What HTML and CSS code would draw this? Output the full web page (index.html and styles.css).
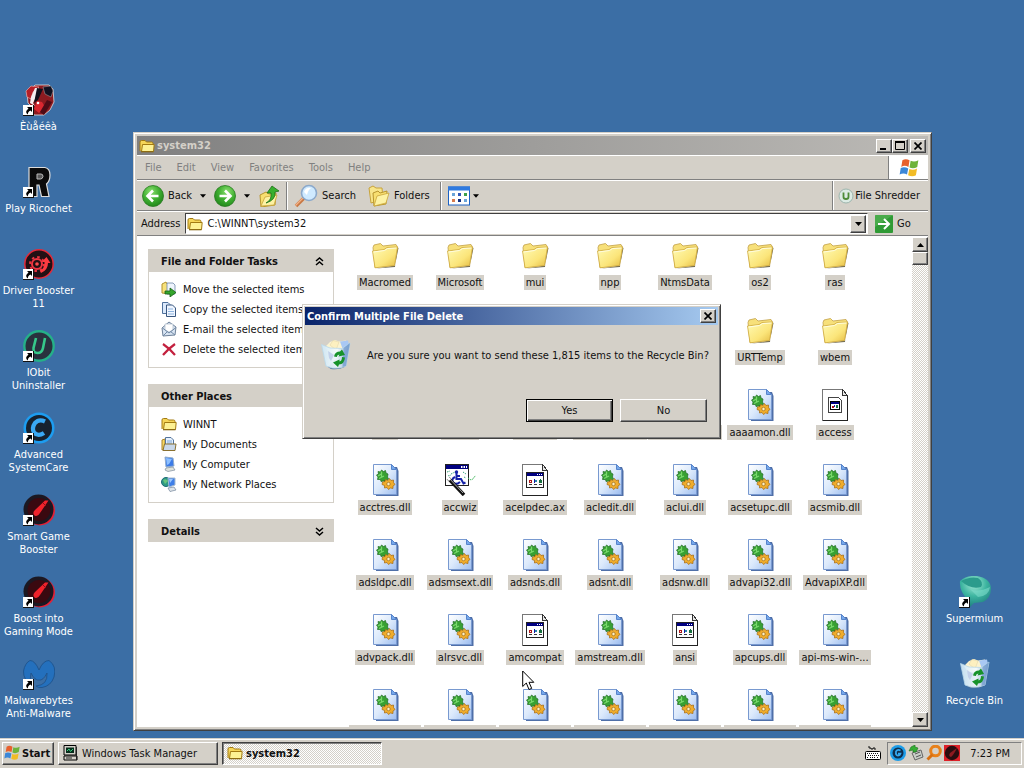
FILE: index.html
```html
<!DOCTYPE html>
<html lang="en">
<head>
<meta charset="utf-8">
<title>system32</title>
<link rel="stylesheet" href="styles.css">
</head>
<body>
<svg class="sprite" aria-hidden="true">
  <defs>
    <linearGradient id="gFolder" x1="0" y1="0" x2="1" y2="1"><stop offset="0" stop-color="#fffbb5"/><stop offset=".6" stop-color="#fbe57a"/><stop offset="1" stop-color="#e3b93f"/></linearGradient>
    <linearGradient id="gPage" x1="0" y1="0" x2="1" y2="1"><stop offset="0" stop-color="#fff"/><stop offset=".5" stop-color="#dbe9fb"/><stop offset="1" stop-color="#9dbdf0"/></linearGradient>
    <radialGradient id="gGreen" cx=".4" cy=".3" r=".8"><stop offset="0" stop-color="#8be070"/><stop offset=".5" stop-color="#3fae31"/><stop offset="1" stop-color="#1c7f16"/></radialGradient>
    <linearGradient id="gBin" x1="0" y1="0" x2="1" y2="0"><stop offset="0" stop-color="#cfe8f6"/><stop offset=".55" stop-color="#f4fbfd"/><stop offset="1" stop-color="#7fa9d6"/></linearGradient>
    <radialGradient id="gTeal" cx=".45" cy=".25" r=".8"><stop offset="0" stop-color="#a6ead8"/><stop offset=".5" stop-color="#3db5a0"/><stop offset="1" stop-color="#1b7a7c"/></radialGradient>

    <symbol id="folder" viewBox="0 0 32 32">
      <path d="M7 29.500L26 26.500L29.500 9L28 8L26 28z" fill="#6f6a55"/>
      <path d="M4 8.500L5 6L11.500 4.500L14 7L27 5.500L28.500 8L25.500 26L6 28.500z" fill="#f7e07a" stroke="#c2a046" stroke-width=".8"/>
      <path d="M3.500 12L15 10.500L18 8.500L28.500 8L25.500 26.500L6 28.800z" fill="url(#gFolder)" stroke="#cfa93f" stroke-width=".8"/>
      <path d="M4.500 13L15.500 11.500L18.500 9.500L27.500 9" fill="none" stroke="#fffde0"/>
    </symbol>
    <symbol id="folder16" viewBox="0 0 16 16">
      <path d="M1 13V4Q1 2.500 2.500 2.500H6L7.500 4H12.500Q14 4 14 5.500V7" fill="#f5d558" stroke="#a27a12"/>
      <path d="M2.500 13.500L3.500 6.500H15.200L14.500 13.500z" fill="#fdf193" stroke="#a27a12"/>
      <path d="M2 13.700H14.500" stroke="#8b6a14" stroke-width="1.200"/>
    </symbol>
    <symbol id="dll" viewBox="0 0 32 32">
      <path d="M7 3H28L29.500 7V32H7z" fill="#4f6fa8"/>
      <path d="M4.500 .5H22.500L27.500 5.500V30.500H4.500z" fill="url(#gPage)" stroke="#7899d0"/>
      <path d="M22.500 .5V5.500H27.500z" fill="#77a9ea" stroke="#5684cc"/>
      <path d="M7.500 11L9.500 10L9 7.500L11.500 8L12.500 6L14.500 7.500L16.500 6.500L17 9L19 10L18.500 13L19.500 15L17.500 16.500L17 18.500L14.500 17L12 17.500L11.500 15.500L8.500 15.500L9 13z" fill="#37a032" stroke="#1f6a22" stroke-width=".7"/>
      <path d="M9 12L13 9.500M12.500 7.500V13M10 14.500L15 12" stroke="#79d86c" stroke-width="1.300"/>
      <path d="M15 16L19 18L17 20z" fill="#25471c"/>
      <path d="M13.500 18L16 17.500L16.500 15.500L19 16.500L20.500 14.500L22 16.500L24.500 16L24.500 18.500L26 20.500L24 22L24 24.500L21.500 24L19.500 25.500L18 23.500L15.500 24L15.500 21.500L13 20.500z" fill="#efac2c" stroke="#a5690f" stroke-width=".7"/>
      <circle cx="19.500" cy="20" r="1.700" fill="#fff0c0" stroke="#8a5a10" stroke-width=".6"/>
    </symbol>
    <symbol id="ax" viewBox="0 0 32 32" shape-rendering="crispEdges">
      <path d="M3.500 .5H23.500L28.500 6.500V31.500H3.500z" fill="#fff" stroke="#777"/>
      <path d="M28.500 6.500V31.500H3.500" fill="none" stroke="#222"/><path d="M23.500 .5V6.500H28.500z" fill="#e8e8e8" stroke="#333"/>
      <rect x="7.500" y="8.500" width="17" height="15" fill="#fff" stroke="#222"/>
      <rect x="8" y="9" width="16" height="3" fill="#000080"/><path d="M18 10.500h1m1 0h1m1 0h1" stroke="#fff"/>
      <rect x="10" y="16" width="3" height="3" fill="#b01818"/><rect x="11" y="17" width="1" height="1" fill="#fff"/><rect x="15" y="15" width="1" height="4" fill="#1818a8"/><rect x="16" y="16" width="2" height="2" fill="#2a8aaa"/><rect x="20" y="16" width="3" height="3" fill="#187040"/><rect x="21" y="15" width="1" height="1" fill="#187040"/>
      <path d="M10 20.500h3m2 0h3m2 0h3" stroke="#333" stroke-width="1"/>
    </symbol>
    <symbol id="accessfile" viewBox="0 0 32 32" shape-rendering="crispEdges">
      <path d="M3.500 .5H23.500L28.500 6.500V31.500H3.500z" fill="#fff" stroke="#777"/>
      <path d="M28.500 6.500V31.500H3.500" fill="none" stroke="#222"/><path d="M23.500 .5V6.500H28.500z" fill="#e8e8e8" stroke="#333"/>
      <path d="M9.500 8.500H19.500L22.500 11.500V23.500H9.500z" fill="#fff" stroke="#444"/>
      <rect x="11.500" y="12.500" width="9" height="8" fill="#fff" stroke="#000"/><rect x="12" y="13" width="8" height="2" fill="#000080"/>
      <rect x="13" y="17" width="2" height="2" fill="#b01818"/><rect x="15" y="16" width="1" height="2" fill="#1818a8"/><rect x="17" y="16" width="2" height="3" fill="#187040"/>
    </symbol>
    <symbol id="accwiz" viewBox="0 0 32 32">
      <rect x="1.500" y=".5" width="23" height="21" fill="#fff" stroke="#222"/><rect x="2" y="1" width="22" height="4" fill="#000080"/><path d="M17 3h1.500m1 0h1.500m1 0h1" stroke="#fff" stroke-width="2"/>
      <path d="M3 8l3-1m1 3l4-2m-7 4l3-1m12-3l3 2m-2 3l2 1" stroke="#35a57a" stroke-dasharray="1.500 1"/>
      <circle cx="12.500" cy="8" r="1.700" fill="#1522a8"/><path d="M12.500 9V15H17L19.500 19.500L21.500 18.500M12.500 12H16M11 13Q7 15 9 18.500Q12 21.500 16 18" stroke="#1522a8" stroke-width="2" fill="none"/>
      <path d="M24 14l3 2l2-1l1-2l2-1" stroke="#3bb558" fill="none" stroke-dasharray="1.500 1"/>
      <path d="M4 14L20 31" stroke="#111" stroke-width="3.500"/><path d="M4.500 13.500L19 29" stroke="#a8a8a8" stroke-width="1"/><path d="M3 13L6 16" stroke="#fff" stroke-width="3"/>
    </symbol>
    <symbol id="bin" viewBox="0 0 32 32">
      <path d="M28 7L24.500 28Q19 31 11 30L8 28z" fill="#54749d"/>
      <path d="M5 8L10 3L15 1L19 2.500L26 1.500L28 9L24 14H9z" fill="#fbf3d0"/><path d="M20 2.500L28 1.500L29 6L23 11z" fill="#a9c8f4"/><path d="M10 6L13 1.500L19 3L16 11z" fill="#fdf0c0" stroke="#e0d2a4" stroke-width=".5"/>
      <path d="M1.500 5.500L10 9L22 9.500L30 4L26 27Q20 30 12 29L6 27z" fill="url(#gBin)" fill-opacity=".93" stroke="#b9d8ea" stroke-width=".8"/>
      <path d="M23.500 9L30 4L26 27L22.500 28z" fill="#6d97cd" opacity=".65"/>
      <path d="M8 12l6 4-3 6-2-3z" fill="#b7c5e6" opacity=".7"/>
      <path d="M14 17.500Q15 12.500 20 12.500L22 10.500L25 16L18.500 17.500L19.500 15.500Q17 15.500 16.800 18z" fill="#17922a"/>
      <path d="M25 18.500Q24.500 25 19 25.500L18 28L13 23.500L19.500 20.500L19.500 22.500Q22 22 22 18z" fill="#17922a"/>
    </symbol>
    <symbol id="shortcut" viewBox="0 0 11 11"><rect width="11" height="11" fill="#111"/><rect width="10" height="10" fill="#fff"/><path d="M4 2H9V7L7.500 5.500Q4.500 7 5 9.500Q1 7 5.500 3.500z" fill="#000"/></symbol>
    <symbol id="flag" viewBox="0 0 20 20">
      <path d="M4 3Q7 1 10.500 3L9.500 9Q6 7 3 9z" fill="#e8602c"/><path d="M11.500 3.500Q15 5 18.500 3L17.500 9Q14 11 10.500 9.500z" fill="#6db33a"/><path d="M2.500 10Q6 8.500 9.300 10.500L8.200 16Q5 14 1.500 16z" fill="#3b87d8"/><path d="M10.300 11Q14 12.500 17.300 10.500L16.300 16.500Q13 18.500 9.200 16.500z" fill="#f2bc26"/>
    </symbol>
    <symbol id="gauge" viewBox="0 0 32 32">
      <circle cx="17" cy="16.500" r="15" fill="#e61f35"/><circle cx="15.500" cy="15.500" r="15" fill="#1b1822"/><circle cx="16" cy="15.500" r="11.500" fill="#3a0910"/><path d="M25.500 6.500L22 6.500L12 16Q9 19 11.500 21.500Q14.500 23.500 17 19z" fill="#f0222b"/><path d="M20 9L23 12" stroke="#8e101a" stroke-width="1"/>
    </symbol>
    <symbol id="care" viewBox="0 0 32 32"><circle cx="16" cy="16" r="15.500" fill="#1d9df0"/><circle cx="16" cy="16" r="13" fill="#17222f"/><path d="M22 9.500Q16 6.500 12 11Q8.500 16 11 20.500Q15 25 21 21" fill="none" stroke="#3aa8f3" stroke-width="4.200"/></symbol>
    <symbol id="back" viewBox="0 0 22 22"><circle cx="11" cy="11" r="10.500" fill="url(#gGreen)" stroke="#2a7a22" stroke-width=".8"/><path d="M16.500 11H6M11 5.500L5.500 11L11 16.500" fill="none" stroke="#fff" stroke-width="2.600"/></symbol>
    <symbol id="pc" viewBox="0 0 16 16"><path d="M4 1L12 2L13 10L5 11z" fill="#3c7be8" stroke="#8faccd"/><path d="M5 2L11 3L8 8L6 9z" fill="#8dc0ff"/><path d="M5 12L12 11L14 14L7 15.500L4 14z" fill="#e0e3dc" stroke="#7d8b9b" stroke-width=".7"/></symbol>
    <symbol id="drop" viewBox="0 0 7 4"><path d="M0 0H7L3.500 4z"/></symbol>
    <symbol id="x" viewBox="0 0 8 8"><path d="M.5 .5L7.500 7.500M7.500 .5L.5 7.500" stroke="#000" stroke-width="1.700"/></symbol>
    <symbol id="up2" viewBox="0 0 9 9"><path d="M1 4L4.500 1L8 4M1 8L4.500 5L8 8" fill="none" stroke="#000" stroke-width="1.500"/></symbol>
  </defs>
</svg>

<main class="desktop">
  <ul class="shortcuts">
    <li><span class="pic"><svg viewBox="0 0 32 32"><path d="M4 8L9 4L12 1H26L30 5L31 18L27 26L21 31H11L8 22L5 19z" fill="#8c1a20" stroke="#ddd" stroke-width=".8"/><path d="M3 7L8 2L16 3L10 8L8 15L4 13z" fill="#b51f28" stroke="#f3b5b0" stroke-width=".6"/><path d="M12 4L16 4L13 13L10 19L12 22L7 19L8 13z" fill="#f5eef0"/><path d="M14 4L20 5L15 16L11 19z" fill="#12101c"/><path d="M20 3L28 2L30 7L28 13L22 10z" fill="#101020" stroke="#aaa" stroke-width=".5"/><path d="M14 17L19 18L22 23L16 29L11 25z" fill="#d92730"/><path d="M24 16L29 18L21 31L17 28z" fill="#4e0b16"/><circle cx="15" cy="19" r="1.300" fill="#fff"/></svg><svg class="arrow"><use href="#shortcut"/></svg></span><span>Èùåéêà</span></li>
    <li><span class="pic"><svg viewBox="0 0 32 32"><path d="M6 1.500H22Q27 2.500 27 9Q27 15 23.500 18L26 30.500H18.500L16 19H14V30.500H6z" fill="#0b0b0b" stroke="#dcdcdc" stroke-width="1.200"/><path d="M14 8H18Q20 8 20 10.500Q19.500 13 17.500 13H14z" fill="#5b5b5b" stroke="#bbb" stroke-width="1"/></svg><svg class="arrow"><use href="#shortcut"/></svg></span><span>Play Ricochet</span></li>
    <li><span class="pic"><svg viewBox="0 0 32 32"><circle cx="16" cy="16" r="14.200" fill="#231014" stroke="#e42a3a" stroke-width="1.500"/><circle cx="14" cy="16" r="5" fill="none" stroke="#ee3440" stroke-width="2"/><circle cx="14" cy="16" r="7" fill="none" stroke="#ee3440" stroke-width="2" stroke-dasharray="2.500 3"/><path d="M17 23Q22 20 21.500 14H18.500L23.500 9L27.500 15H25Q25 22 18 25z" fill="#ff3b40"/><circle cx="14" cy="16" r="1.800" fill="#ff4b4b"/></svg><svg class="arrow"><use href="#shortcut"/></svg></span><span>Driver Booster 11</span></li>
    <li><span class="pic"><svg viewBox="0 0 32 32"><circle cx="16" cy="16" r="14.700" fill="#29323e" stroke="#25b088" stroke-width="2.400"/><path d="M13 8L10.500 18Q10 23 14.500 23Q19 23 20 18L22 8" fill="none" stroke="#36c98a" stroke-width="2.600"/></svg><svg class="arrow"><use href="#shortcut"/></svg></span><span>IObit Uninstaller</span></li>
    <li><span class="pic"><svg><use href="#care"/></svg><svg class="arrow"><use href="#shortcut"/></svg></span><span>Advanced SystemCare</span></li>
    <li><span class="pic"><svg><use href="#gauge"/></svg><svg class="arrow"><use href="#shortcut"/></svg></span><span>Smart Game Booster</span></li>
    <li><span class="pic"><svg><use href="#gauge"/></svg><svg class="arrow"><use href="#shortcut"/></svg></span><span>Boost into Gaming Mode</span></li>
    <li><span class="pic"><svg viewBox="0 0 32 32"><path d="M7 2.500Q12 2.500 16 12Q20 2.500 26 2.500Q34 8 31 19Q28 28 19 29.500Q15 30 13 28Q25 27 24 15Q20 23 16 22Q12 23 8 15Q6 22 9 27Q0 22 .5 13Q2 5 7 2.500z" fill="#2470bd" stroke="#1f548c" stroke-width=".9"/></svg><svg class="arrow"><use href="#shortcut"/></svg></span><span>Malwarebytes Anti-Malware</span></li>
  </ul>
  <ul class="shortcuts shortcuts-right">
    <li><span class="pic"><svg viewBox="0 0 32 32"><path d="M1 5Q8 -1 18 0Q31 2 32 12Q32 22 24 26L15 27L11 31L10 25Q0 16 1 5z" fill="url(#gTeal)"/><path d="M2 5Q11 0 19 2Q25 6 22 11Q12 14 2 5z" fill="#2b9b8c"/><path d="M11 13Q19 17 31 11Q30 20 19 21z" fill="#7fdccb" opacity=".6"/></svg><svg class="arrow"><use href="#shortcut"/></svg></span><span>Supermium</span></li>
    <li><span class="pic"><svg><use href="#bin"/></svg></span><span>Recycle Bin</span></li>
  </ul>

  <section class="window explorer" aria-label="system32">
    <header class="titlebar inactive">
      <svg class="i16"><use href="#folder16"/></svg><h1>system32</h1>
      <div class="controls">
        <button class="cap" aria-label="Minimize"><svg viewBox="0 0 10 9"><path d="M1 7H7V9H1z"/></svg></button>
        <button class="cap" aria-label="Maximize"><svg viewBox="0 0 10 9"><path d="M.5 1H9.500V8.500H.5z" fill="none" stroke="#000"/><path d="M0 1H10" stroke="#000" stroke-width="2"/></svg></button>
        <button class="cap cap-close" aria-label="Close"><svg class="i8"><use href="#x"/></svg></button>
      </div>
    </header>
    <div class="bar menubar">
      <nav><button>File</button><button>Edit</button><button>View</button><button>Favorites</button><button>Tools</button><button>Help</button></nav>
      <div class="throbber"><svg class="i22"><use href="#flag"/></svg></div>
    </div>
    <div class="bar toolbar">
      <div class="tools">
        <button class="tool"><svg class="i22"><use href="#back"/></svg>Back</button>
        <button class="more" aria-label="Back history"><svg><use href="#drop"/></svg></button>
        <button class="tool" aria-label="Forward"><svg class="i22 flip"><use href="#back"/></svg></button>
        <button class="more" aria-label="Forward history"><svg><use href="#drop"/></svg></button>
        <button class="tool" aria-label="Up"><svg class="i22" viewBox="0 0 22 22"><path d="M2 10L8 7L11 9L18 8L17 20L3 22z" fill="#f8df70" stroke="#b8952e"/><path d="M3 21L7 12L19 10L16 20z" fill="#fdf2a4" stroke="#c9a43a" stroke-width=".8"/><path d="M8 18Q14 15 13 8H9L14 1L21 6L17 7Q18 15 8 18z" fill="#38b02e" stroke="#1c6f17" stroke-width=".8"/></svg></button>
        <span class="rule"></span>
        <button class="tool"><svg class="i24" viewBox="0 0 24 24"><path d="M10 14L2 22" stroke="#c87844" stroke-width="3.500"/><path d="M9 14L1.500 21.500" stroke="#f3b287" stroke-width="1.200"/><circle cx="15" cy="9" r="7.500" fill="#cfeaff" stroke="#8ba9cb" stroke-width="1.600"/><path d="M10 8Q12 3 17 4Q14 6 13 11z" fill="#fff"/></svg>Search</button>
        <button class="tool folders"><svg class="i22" viewBox="0 0 22 22"><path d="M1 3L5 1L8 3H14L15 14L3 18z" fill="#f8e58a" stroke="#c8a33b"/><path d="M5 8L10 6L12 8L19 6L18 19L6 21z" fill="#f8df70" stroke="#b8952e"/><path d="M6 21L9 11L21 8L18 18z" fill="#fdf2a4" stroke="#c9a43a" stroke-width=".8"/></svg>Folders</button>
        <span class="rule"></span>
        <button class="tool" aria-label="Views"><svg class="i22" viewBox="0 0 22 22"><rect x=".5" y="2" width="21" height="18" fill="#fff" stroke="#1c62c4"/><rect x="0" y="1.500" width="22" height="4" fill="#2f7ae0"/><path d="M4 8h3v3H4zM16 14h3v3h-3z" fill="#6aa4d8"/><path d="M10 8h3v3h-3z" fill="#3158b8"/><path d="M16 8h3v3h-3z" fill="#3da04a"/><path d="M4 14h3v3H4z" fill="#d77a4c"/><path d="M10 14h3v3h-3z" fill="#102d80"/></svg></button>
        <button class="more views" aria-label="View options"><svg><use href="#drop"/></svg></button>
      </div>
      <button class="tool shredder"><svg class="i16" viewBox="0 0 16 16"><circle cx="8" cy="8" r="7" fill="#dcebe4" stroke="#9db5ad"/><path d="M5.500 4.500V9Q5.500 11 8 11Q10.500 11 10.500 9V4.500" fill="none" stroke="#4d8b38" stroke-width="1.800"/></svg>File Shredder</button>
    </div>
    <div class="bar addressbar">
      <label for="address">Address</label>
      <div class="combo">
        <svg class="i16"><use href="#folder16"/></svg>
        <input id="address" type="text" value="C:\WINNT\system32">
        <button class="cap" aria-label="Show addresses"><svg class="tri"><use href="#drop"/></svg></button>
      </div>
      <button class="go"><svg class="i18" viewBox="0 0 18 18"><rect width="18" height="18" rx="1" fill="#2f9a35"/><path d="M0 0H18L0 12z" fill="#5cb85a" opacity=".6"/><path d="M3 9H14M9 4L14 9L9 14" fill="none" stroke="#fff" stroke-width="2"/></svg>Go</button>
    </div>
    <div class="content">
      <aside class="side">
        <section class="panel">
          <h2>File and Folder Tasks<button aria-label="Collapse"><svg><use href="#up2"/></svg></button></h2>
          <ul>
            <li><a href="#"><svg viewBox="0 0 16 16"><path d="M1 12V3L5 1L6 3H10V13z" fill="#f7e17a" stroke="#b0912f"/><path d="M6 2H12L14 4V13H6z" fill="#eef4fc" stroke="#6d86a8" stroke-width=".8"/><path d="M4 10H9V7L15 11.500L9 16V13H4z" fill="#35a52c" stroke="#185f14" stroke-width=".8"/></svg>Move the selected items</a></li>
            <li><a href="#"><svg viewBox="0 0 16 16"><path d="M1.500 1.500H7L9 3.500V12.500H1.500z" fill="#dbe9fb" stroke="#4f719c"/><path d="M5.500 4H11.500L14.500 7V15.500H5.500z" fill="#f0f6ff" stroke="#39567f"/><path d="M7 8H12M7 10.500H13M7 13H13" stroke="#8db3de"/></svg>Copy the selected items</a></li>
            <li><a href="#"><svg viewBox="0 0 16 16"><path d="M1 7L8 1L15 6L14 14L2 15z" fill="#d8e4f2" stroke="#6d8098"/><path d="M4 3H12V9L8 11L4 9z" fill="#fff" stroke="#a9b8c8" stroke-width=".7"/><path d="M1.500 7L8 12L15 6.500M2 15L6.500 10.500M14 14L9.500 10.500" stroke="#7189a5" fill="none"/></svg>E-mail the selected items</a></li>
            <li><a href="#"><svg viewBox="0 0 16 16"><path d="M2 3Q8 7 14 14M14 3Q7 8 2 14" stroke="#c3203e" stroke-width="2.200" fill="none"/></svg>Delete the selected items</a></li>
          </ul>
        </section>
        <section class="panel">
          <h2>Other Places<button aria-label="Collapse"><svg><use href="#up2"/></svg></button></h2>
          <ul>
            <li><a href="#"><svg><use href="#folder16"/></svg>WINNT</a></li>
            <li><a href="#"><svg viewBox="0 0 16 16"><path d="M1 14V4L4 3V13z" fill="#f7d964" stroke="#a9832a"/><path d="M4.500 1.500H10L12.500 4V11H4.500z" fill="#e6f1fd" stroke="#54759d"/><path d="M6 5H11M6 7H11" stroke="#7ca6d8"/><path d="M2 14.500L3.500 8H15L14 14.500z" fill="#c9d8ea" stroke="#8a7130"/></svg>My Documents</a></li>
            <li><a href="#"><svg><use href="#pc"/></svg>My Computer</a></li>
            <li><a href="#"><svg viewBox="0 0 16 16"><circle cx="5" cy="6" r="4.500" fill="#2f9a83" stroke="#1c6a78"/><path d="M2 4Q5 2 7 5L4 8z" fill="#67c57c"/><path d="M7 2L14 2L14 9L8 11z" fill="#3f7fe8" stroke="#a4bad0"/><path d="M8 3L12 3L9 7z" fill="#9cc9ff"/><path d="M7 12L13 11L15 14L9 15.500z" fill="#dfe5ea" stroke="#73859b" stroke-width=".7"/></svg>My Network Places</a></li>
          </ul>
        </section>
        <section class="panel">
          <h2>Details<button aria-label="Expand"><svg class="down"><use href="#up2"/></svg></button></h2>
        </section>
      </aside>
      <ul class="files">
        <li><svg><use href="#folder"/></svg><span>Macromed</span></li>
        <li><svg><use href="#folder"/></svg><span>Microsoft</span></li>
        <li><svg><use href="#folder"/></svg><span>mui</span></li>
        <li><svg><use href="#folder"/></svg><span>npp</span></li>
        <li><svg><use href="#folder"/></svg><span>NtmsData</span></li>
        <li><svg><use href="#folder"/></svg><span>os2</span></li>
        <li><svg><use href="#folder"/></svg><span>ras</span></li>
        <li><svg><use href="#folder"/></svg></li>
        <li><svg><use href="#folder"/></svg></li>
        <li><svg><use href="#folder"/></svg></li>
        <li><svg><use href="#folder"/></svg></li>
        <li><svg><use href="#folder"/></svg></li>
        <li><svg><use href="#folder"/></svg><span>URTTemp</span></li>
        <li><svg><use href="#folder"/></svg><span>wbem</span></li>
        <li><svg><use href="#folder"/></svg><span>wins</span></li>
        <li><svg><use href="#folder"/></svg><span>xircom</span></li>
        <li><svg><use href="#ax"/></svg><span>$winnt$</span></li>
        <li><svg><use href="#ax"/></svg><span>12520437.cpx</span></li>
        <li><svg><use href="#ax"/></svg><span>12520850.cpx</span></li>
        <li><svg><use href="#dll"/></svg><span>aaaamon.dll</span></li>
        <li><svg><use href="#accessfile"/></svg><span>access</span></li>
        <li><svg><use href="#dll"/></svg><span>acctres.dll</span></li>
        <li><svg><use href="#accwiz"/></svg><span>accwiz</span></li>
        <li><svg><use href="#ax"/></svg><span>acelpdec.ax</span></li>
        <li><svg><use href="#dll"/></svg><span>acledit.dll</span></li>
        <li><svg><use href="#dll"/></svg><span>aclui.dll</span></li>
        <li><svg><use href="#dll"/></svg><span>acsetupc.dll</span></li>
        <li><svg><use href="#dll"/></svg><span>acsmib.dll</span></li>
        <li><svg><use href="#dll"/></svg><span>adsldpc.dll</span></li>
        <li><svg><use href="#dll"/></svg><span>adsmsext.dll</span></li>
        <li><svg><use href="#dll"/></svg><span>adsnds.dll</span></li>
        <li><svg><use href="#dll"/></svg><span>adsnt.dll</span></li>
        <li><svg><use href="#dll"/></svg><span>adsnw.dll</span></li>
        <li><svg><use href="#dll"/></svg><span>advapi32.dll</span></li>
        <li><svg><use href="#dll"/></svg><span>AdvapiXP.dll</span></li>
        <li><svg><use href="#dll"/></svg><span>advpack.dll</span></li>
        <li><svg><use href="#dll"/></svg><span>alrsvc.dll</span></li>
        <li><svg><use href="#ax"/></svg><span>amcompat</span></li>
        <li><svg><use href="#dll"/></svg><span>amstream.dll</span></li>
        <li><svg><use href="#ax"/></svg><span>ansi</span></li>
        <li><svg><use href="#dll"/></svg><span>apcups.dll</span></li>
        <li><svg><use href="#dll"/></svg><span>api-ms-win-...</span></li>
        <li><svg><use href="#dll"/></svg><span>api-ms-win-...</span></li>
        <li><svg><use href="#dll"/></svg><span>api-ms-win-...</span></li>
        <li><svg><use href="#dll"/></svg><span>api-ms-win-...</span></li>
        <li><svg><use href="#dll"/></svg><span>api-ms-win-...</span></li>
        <li><svg><use href="#dll"/></svg><span>api-ms-win-...</span></li>
        <li><svg><use href="#dll"/></svg><span>api-ms-win-...</span></li>
        <li><svg><use href="#dll"/></svg><span>api-ms-win-...</span></li>
      </ul>
      <div class="scrollbar">
        <button class="cap" aria-label="Scroll up"><svg class="tri down"><use href="#drop"/></svg></button>
        <div class="thumb"></div>
        <button class="cap last" aria-label="Scroll down"><svg class="tri"><use href="#drop"/></svg></button>
      </div>
    </div>
  </section>

  <section class="window dialog" role="dialog" aria-labelledby="dlg">
    <header class="titlebar active"><h1 id="dlg">Confirm Multiple File Delete</h1><div class="controls"><button class="cap" aria-label="Close dialog"><svg class="i8"><use href="#x"/></svg></button></div></header>
    <div class="question"><svg class="i32"><use href="#bin"/></svg><p>Are you sure you want to send these 1,815 items to the Recycle Bin?</p></div>
    <div class="answers"><button class="push default">Yes</button><button class="push">No</button></div>
  </section>

  <svg class="pointer" viewBox="0 0 13 21"><path d="M.7 1V16.500L4.300 13L7 19.500L9.700 18.400L7 12.300H11.800z" fill="#fff" stroke="#000"/></svg>
</main>

<footer class="taskbar">
  <button class="start"><svg class="i18"><use href="#flag"/></svg>Start</button>
  <button class="task"><svg class="i16" viewBox="0 0 16 16"><path d="M1 .5H13V10H1z" fill="#d4d0c8" stroke="#000"/><rect x="3" y="2.500" width="8" height="5.500" fill="#052c1b"/><path d="M4 6L6 4L7.500 6.500L10 4" stroke="#3bd080" fill="none"/><path d="M1 11H14V15H1z" fill="#d4d0c8" stroke="#000"/><path d="M3 13H9M13.500 2V15" stroke="#222"/></svg>Windows Task Manager</button>
  <button class="task pressed"><svg class="i16"><use href="#folder16"/></svg>system32</button>
  <svg class="i16 keyboard" viewBox="0 0 16 16"><path d="M4 1V3H6V4H8V3H10V5" fill="none" stroke="#111"/><rect x=".5" y="6.500" width="15" height="8" rx="1" fill="#fff" stroke="#000"/><path d="M2 8.500H14M3 10.500H14M2 12.500H4M5 12.500H11M12 12.500H14" stroke="#111" stroke-dasharray="1 1"/></svg>
  <div class="tray">
    <svg class="i16" viewBox="0 0 32 32"><circle cx="16" cy="16" r="16" fill="#1c9ce8"/><circle cx="16" cy="16" r="11" fill="#0f2e4c"/><path d="M21 11Q15 8 12 13Q11 21 16 21Q20 21 21 17H16" fill="none" stroke="#33a9f2" stroke-width="3.500"/></svg>
    <svg class="i16" viewBox="0 0 16 16"><path d="M4 8L13 5L15 12L7 15z" fill="#c9cdc8" stroke="#666"/><path d="M7 9L12 7M8 12L13 10" stroke="#555"/><path d="M3 2L7 0L7 2L10 3L8 7L5 7L5 5L1 6z" fill="#35ae35" stroke="#1c701c" stroke-width=".6"/></svg>
    <svg class="i16" viewBox="0 0 16 16"><circle cx="9.500" cy="6" r="4.800" fill="none" stroke="#e8811a" stroke-width="3"/><path d="M6.500 9.500L1.500 14.500" stroke="#d86f10" stroke-width="3"/></svg>
    <svg class="i16" viewBox="0 0 16 16"><rect width="16" height="16" fill="#dd2028"/><circle cx="8" cy="8" r="7.200" fill="#2a0d10"/><path d="M13 3L6 8Q4 11 7 12Q9 11 13 3z" fill="#8e1a20"/></svg>
    <time>7:23 PM</time>
  </div>
</footer>
</body>
</html>
```

FILE: styles.css
```css
* { box-sizing: border-box; }

:root {
  --face: #d4d0c8;
  --shade: #808080;
  --dark: #404040;
}

body {
  margin: 0;
  height: 100vh;
  display: flex;
  flex-direction: column;
  overflow: hidden;
  font: 11px/13px "DejaVu Sans Condensed", "Noto Sans", sans-serif;
  color: #111;
  background: #3b6ea5;
  cursor: default;
}

ul, h1, h2, p { margin: 0; padding: 0; list-style: none; font-size: 11px; }
a { color: inherit; text-decoration: none; }
svg { display: block; flex: none; }
button {
  font: inherit;
  color: inherit;
  padding: 0;
  margin: 0;
  border: 0;
  background: none;
  white-space: nowrap;
}

.sprite { position: absolute; width: 0; height: 0; }
.i8 { width: 8px; height: 8px; }
.i16 { width: 16px; height: 16px; }
.i18 { width: 18px; height: 18px; }
.i22 { width: 22px; height: 22px; }
.i24 { width: 24px; height: 24px; }
.i32 { width: 32px; height: 32px; }
.flip { transform: scaleX(-1); }
.down { transform: scaleY(-1); }

/* Desktop */
.desktop { position: relative; flex: 1; min-height: 0; }

.shortcuts {
  position: absolute;
  left: 0;
  top: 84px;
  width: 77px;
  display: grid;
  grid-auto-rows: 82px;
  color: #fff;
  text-align: center;
}
.shortcuts-right { left: auto; right: 11px; top: 576px; }
.shortcuts li { display: flex; flex-direction: column; align-items: center; gap: 4px; }
.pic { position: relative; }
.pic svg { width: 32px; height: 32px; }
.pic .arrow { position: absolute; left: 0; bottom: 0; width: 11px; height: 11px; }

/* Windows */
.window {
  position: absolute;
  display: flex;
  flex-direction: column;
  background: var(--face);
  border: 1px solid;
  border-color: var(--face) var(--dark) var(--dark) var(--face);
  box-shadow: inset 1px 1px #fff, inset -1px -1px var(--shade);
}
.explorer { left: 133px; right: 92px; top: 132px; bottom: 7px; padding: 3px; }
.dialog { left: 302px; top: 304px; width: 419px; padding: 2px; }

.titlebar { display: flex; align-items: center; height: 18px; padding: 0 2px; gap: 2px; }
.titlebar h1 { flex: 1; font-weight: bold; }
.inactive { height: 19px; color: #d4d0c8; background: linear-gradient(90deg, #808080, #bcbab6); }
.active { color: #fff; background: linear-gradient(90deg, #0a246a, #a6caf0); }

.controls { display: flex; }
.cap {
  display: flex;
  align-items: center;
  justify-content: center;
  width: 16px;
  height: 14px;
  background: var(--face);
  border: 1px solid;
  border-color: #fff var(--dark) var(--dark) #fff;
  box-shadow: inset -1px -1px var(--shade);
}
.cap svg { width: 10px; height: 9px; }
.cap .i8 { width: 8px; height: 8px; }
.cap .tri { width: 7px; height: 4px; }
.cap-close { margin-left: 2px; }

.bar {
  display: flex;
  border-top: 1px solid #fff;
  border-bottom: 1px solid var(--shade);
}
.menubar { height: 25px; color: #808080; }
.menubar nav { flex: 1; display: flex; align-items: center; gap: 15px; padding-left: 8px; }
.throbber {
  width: 40px;
  display: flex;
  align-items: center;
  justify-content: center;
  background: #fff;
  border-left: 1px solid var(--shade);
}

.toolbar { height: 31px; }
.tools { flex: 1; display: flex; align-items: center; padding-left: 5px; }
.tool { display: flex; align-items: center; gap: 4px; }
.more { width: 22px; display: flex; justify-content: center; }
.more svg { width: 6px; height: 4px; }
.views { width: 12px; }
.rule { width: 2px; height: 28px; margin: 0 6px; background: linear-gradient(90deg, #808080 50%, #fff 50%); }
.folders { margin-left: 12px; margin-right: 4px; }
.shredder { padding: 0 8px 0 5px; gap: 1px; border-left: 1px solid var(--shade); box-shadow: inset 1px 0 #fff; }

.addressbar { height: 25px; align-items: center; padding-left: 4px; }
.combo {
  flex: 1;
  display: flex;
  align-items: center;
  gap: 4px;
  height: 21px;
  margin-left: 5px;
  padding: 0 1px 0 1px;
  background: #fff;
  border: 1px solid;
  border-color: var(--dark) #fff #fff var(--dark);
}
.combo input { flex: 1; min-width: 0; border: 0; padding: 0; font: inherit; color: inherit; background: none; outline: 0; }
.combo .cap { height: 18px; }
.go { display: flex; align-items: center; gap: 4px; width: 60px; padding-left: 7px; }

.content { flex: 1; display: flex; min-height: 0; padding-top: 1px; background: #fff; overflow: hidden; }

/* Task pane */
.side { width: 211px; padding: 12px 14px 0 11px; display: flex; flex-direction: column; gap: 16px; overflow: hidden; flex: none; }
.panel h2 {
  display: flex;
  align-items: center;
  justify-content: space-between;
  height: 23px;
  padding: 2px 10px 0 13px;
  background: var(--face);
}
.panel h2 svg { width: 9px; height: 9px; }
.panel ul { border: 1px solid var(--face); border-top: 0; padding: 7px 0 8px 12px; }
.panel a { display: flex; align-items: center; gap: 6px; height: 20px; white-space: nowrap; }
.panel a svg { width: 16px; height: 16px; }

/* Icon view */
.files {
  flex: 1;
  display: grid;
  grid-template-columns: repeat(auto-fill, 75px);
  grid-auto-rows: 75px;
  padding-top: 2px;
  text-align: center;
  overflow: hidden;
}
.files li { display: flex; flex-direction: column; align-items: center; gap: 4px; padding-right: 1px; }
.files svg { width: 32px; height: 32px; }
.files span { max-width: 74px; padding: 1px 2px; background: var(--face); white-space: nowrap; overflow: hidden; text-overflow: ellipsis; }

.scrollbar {
  width: 16px;
  display: flex;
  flex-direction: column;
  background: repeating-conic-gradient(#fff 0 25%, var(--face) 0 50%) 0 0 / 2px 2px;
}
.scrollbar .cap { height: 15px; flex: none; }
.thumb { height: 13px; background: var(--face); border: 1px solid; border-color: #fff var(--dark) var(--dark) #fff; box-shadow: inset -1px -1px var(--shade); }
.last { margin-top: auto; }

/* Confirmation */
.question { display: flex; align-items: center; gap: 15px; padding: 14px 15px 0; white-space: nowrap; }
.answers { display: flex; justify-content: flex-end; gap: 7px; padding: 28px 11px 14px; }
.push {
  width: 87px;
  height: 23px;
  border: 1px solid;
  border-color: #fff var(--dark) var(--dark) #fff;
  box-shadow: inset -1px -1px var(--shade);
}
.default { border-color: #000; box-shadow: inset 1px 1px #fff, inset -1px -1px var(--dark), inset -2px -2px var(--shade); }

.pointer { position: absolute; left: 522px; top: 670px; width: 13px; height: 21px; }

/* Taskbar */
.taskbar {
  display: flex;
  align-items: center;
  height: 30px;
  padding: 0 2px;
  background: var(--face);
  box-shadow: inset 0 1px var(--face), inset 0 2px #fff;
}
.start, .task {
  display: flex;
  align-items: center;
  height: 23px;
  border: 1px solid;
  border-color: #fff var(--dark) var(--dark) #fff;
  box-shadow: inset -1px -1px var(--shade);
}
.start { width: 52px; gap: 1px; font-weight: bold; }
.task { width: 160px; margin-left: 4px; padding-left: 4px; gap: 3px; }
.start + .task { margin-left: 4px; }
.pressed {
  font-weight: bold;
  border-color: var(--dark) #fff #fff var(--dark);
  box-shadow: inset 1px 1px var(--shade);
  background: repeating-conic-gradient(#fff 0 25%, var(--face) 0 50%) 0 0 / 2px 2px;
}
.keyboard { margin-left: auto; }
.tray {
  display: flex;
  align-items: center;
  gap: 2px;
  height: 23px;
  margin-left: 6px;
  padding: 0 11px 0 2px;
  border: 1px solid;
  border-color: var(--shade) #fff #fff var(--shade);
}
.tray time { margin-left: 8px; }
```
